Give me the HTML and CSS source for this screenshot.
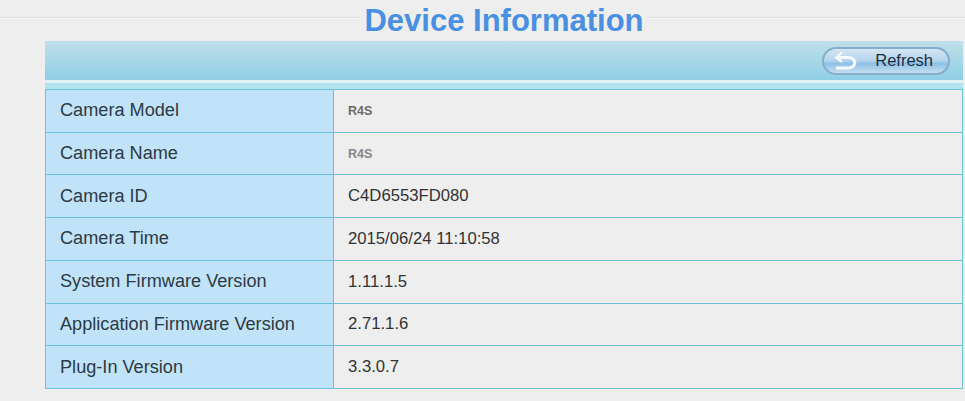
FILE: index.html
```html
<!DOCTYPE html>
<html lang="en">
<head>
    <meta charset="UTF-8">
    <title>Device Information</title>
    <link rel="stylesheet" href="styles.css">
</head>
<body>
    <div class="title-row">
        <h1>Device Information</h1>
    </div>
    <div class="panel">
        <div class="toolbar">
            <button class="refresh" type="button">
                <svg class="refresh-icon" width="26" height="20" viewBox="0 0 26 20">
                    <path d="M4 6.5 H15 C24 6.5 24 17 15 17 H3" fill="none" stroke="#f6fafc" stroke-width="3.2"/>
                    <path d="M9 1.5 L3 6.5 L9 11" fill="none" stroke="#f6fafc" stroke-width="2.2"/>
                </svg>
                <span>Refresh</span>
            </button>
        </div>
        <div class="strip"></div>
        <table class="info">
            <tr><th>Camera Model</th><td class="small">R4S</td></tr>
            <tr><th>Camera Name</th><td class="small faint">R4S</td></tr>
            <tr><th>Camera ID</th><td>C4D6553FD080</td></tr>
            <tr><th>Camera Time</th><td>2015/06/24 11:10:58</td></tr>
            <tr><th>System Firmware Version</th><td>1.11.1.5</td></tr>
            <tr><th>Application Firmware Version</th><td>2.71.1.6</td></tr>
            <tr><th>Plug-In Version</th><td>3.3.0.7</td></tr>
        </table>
    </div>
</body>
</html>
```
FILE: styles.css
```css
body {
    margin: 0;
    background-color: #eeeeee;
    color: #333;
    font-family: "Liberation Sans", Arial, sans-serif;
    overflow: hidden;
}
.title-row {
    height: 41px;
    box-sizing: border-box;
    padding-left: 361px;
    background: linear-gradient(#eeeeee 17px, #dcdcdc 17px, #dcdcdc 18px, #fbfbfb 18px, #fbfbfb 19px, #eeeeee 19px);
}
h1 {
    width: 286px;
    margin: 0;
    background-color: #eeeeee;
    color: #4a90e2;
    font-size: 31px;
    line-height: 41px;
    text-align: center;
}
.panel {
    margin-left: 45px;
    width: 918px;
}
.toolbar {
    height: 39px;
    box-sizing: border-box;
    display: flex;
    justify-content: flex-end;
    align-items: center;
    padding-right: 13px;
    background: linear-gradient(#bfdfe9, #8fcfe6);
}
.refresh {
    display: flex;
    align-items: center;
    justify-content: space-between;
    width: 128px;
    height: 28px;
    padding: 0 15px 0 9px;
    border: 2px solid #84aecb;
    border-radius: 14px;
    background: linear-gradient(#d4e6f2, #b3d4ec 50%, #8ec0e6 60%, #c4dff0);
    color: #1c2c3c;
    font-family: inherit;
    font-size: 16.5px;
}
.strip {
    height: 3px;
    background-color: #e4f1f4;
    border-bottom: 6px solid #b0e4ee;
}
.info {
    width: 100%;
    height: 300px;
    border-collapse: collapse;
    table-layout: fixed;
    border: 1px solid #6cc0d8;
    font-size: 18.15px;
}
.info th, .info td {
    padding: 0 14px;
    border: 1px solid #6cc0d8;
    font-weight: normal;
    text-align: left;
}
.info th {
    width: 259px;
    background-color: #c0e3f9;
    color: #2c3a44;
}
.info td {
    font-size: 16.7px;
    color: #333;
}
.info td.small {
    font-size: 12.5px;
    font-weight: bold;
    color: #6a6a6a;
}
.info td.faint {
    color: #858585;
}
```
